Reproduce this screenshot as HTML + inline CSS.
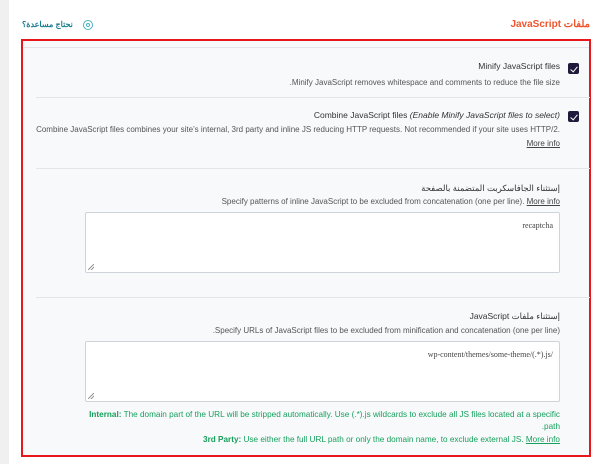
<!DOCTYPE html>
<html><head><meta charset="utf-8"><style>
*{margin:0;padding:0;box-sizing:border-box}
body{width:602px;height:464px;background:#fff;font-family:"Liberation Sans","Noto Sans CJK SC",sans-serif;color:#333;position:relative;overflow:hidden}
.strip{position:absolute;left:0;top:0;width:9px;height:464px;background:#f0f0f1}
.abs{position:absolute;white-space:nowrap}
.r{direction:rtl;text-align:right}
.box{position:absolute;left:21px;top:39px;width:570px;height:418px;border:2px solid #e8171b;background:#f8f9fb}
.sep{position:absolute;left:36px;width:554px;height:1px;background:#e3e5e8}
.cb{position:absolute;left:568px;width:11px;height:11px;background:#1f1a3b;border-radius:2px}
.cb::after{content:"";position:absolute;left:3.5px;top:1.5px;width:3px;height:6px;border:solid #fff;border-width:0 1.5px 1.5px 0;transform:rotate(40deg)}
.t{font-size:8.5px;color:#333}
.d{font-size:8px;color:#555}
.ta{position:absolute;left:85px;width:475px;background:#fff;border:1px solid #cfd3da;border-radius:2px}
.ta span{position:absolute;right:6px;top:8px;font-family:"Liberation Serif",serif;font-size:8px;color:#444;direction:rtl}
.ta i{position:absolute;left:2px;bottom:2px;width:6px;height:6px;background:linear-gradient(135deg,transparent 45%,#999 45%,#999 55%,transparent 55%,transparent 70%,#999 70%,#999 80%,transparent 80%)}
u{color:#444}
.g{font-size:8.2px;color:#16a05b}
</style></head><body>
<div class="strip"></div>
<div class="abs r" style="right:12px;top:19px;font-size:10px;font-weight:bold;color:#f0552c">ملفات JavaScript</div>
<div class="abs r" style="left:22px;top:20px;font-size:8px;font-weight:bold;color:#1a7f8e">نحتاج مساعدة؟</div>
<div class="abs" style="left:83px;top:20px;width:10px;height:10px;border:1.5px solid #4fb3c4;border-radius:50%"><div style="position:absolute;left:1.5px;top:1.5px;width:4px;height:4px;border:1px solid #4fb3c4;border-radius:50%"></div></div>
<div class="box"></div>
<div class="sep" style="top:47px;left:24px;width:565px"></div>
<div class="cb" style="top:63px"></div>
<div class="abs t r" style="right:42px;top:61px">Minify JavaScript files</div>
<div class="abs d r" style="right:42px;top:78px">Minify JavaScript removes whitespace and comments to reduce the file size.</div>
<div class="sep" style="top:97px"></div>
<div class="cb" style="top:111px"></div>
<div class="abs t" style="right:42px;top:110px">Combine JavaScript files <i>(Enable Minify JavaScript files to select)</i></div>
<div class="abs d" style="right:42px;top:125px">Combine JavaScript files combines your site’s internal, 3rd party and inline JS reducing HTTP requests. Not recommended if your site uses HTTP/2.</div>
<div class="abs d" style="right:42px;top:139px"><u>More info</u></div>
<div class="sep" style="top:168px"></div>
<div class="abs t r" style="right:42px;top:183px">إستثناء الجافاسكربت المتضمنة بالصفحة</div>
<div class="abs d" style="right:42px;top:197px">Specify patterns of inline JavaScript to be excluded from concatenation (one per line). <u>More info</u></div>
<div class="ta" style="top:212px;height:61px"><span>recaptcha</span><i></i></div>
<div class="sep" style="top:297px"></div>
<div class="abs t r" style="right:42px;top:311px">إستثناء ملفات JavaScript</div>
<div class="abs d r" style="right:42px;top:326px">Specify URLs of JavaScript files to be excluded from minification and concatenation (one per line).</div>
<div class="ta" style="top:341px;height:61px"><span>/wp-content/themes/some-theme/(.*).js</span><i></i></div>
<div class="abs g" style="right:42px;top:410px"><b>Internal:</b> The domain part of the URL will be stripped automatically. Use (.*).js wildcards to exclude all JS files located at a specific</div>
<div class="abs g" style="right:42px;top:422px">.path</div>
<div class="abs g" style="right:42px;top:435px"><b>3rd Party:</b> Use either the full URL path or only the domain name, to exclude external JS. <u style="color:#16a05b">More info</u></div>
</body></html>
